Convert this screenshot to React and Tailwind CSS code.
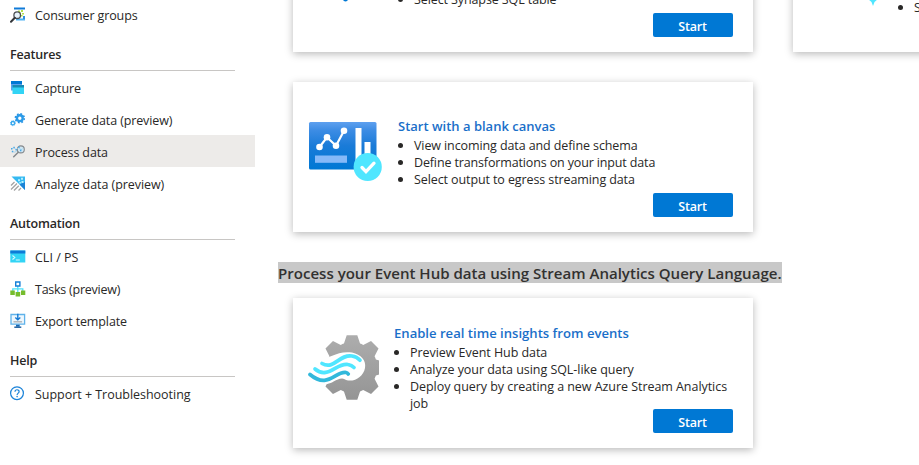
const CARD = 'flex h-[150px] w-[460px] flex-col bg-white shadow-[0_2px_8px_rgba(0,0,0,0.28)]';

function ConsumerIcon() {
  return (
    <svg width="16" height="16" viewBox="0 0 16 16">
      <path d="M4 .5h11v2H4z" fill="#0f7ad8" />
      <path d="M6 11.5h9v2H6z" fill="#50b3f2" />
      <path d="M13 9h2v3h-2z" fill="#2f8fe0" />
      <path d="M8 3.5h2v1.5H8zM11 3h2v2h-2zM12 6h2v1.5h-2zM9 5.6h2v1.4H9zM11 8h1.6v1.6H11z" fill="#b4e04a" />
      <circle cx="7.2" cy="8.2" r="3.3" fill="#e8f3fb" stroke="#4b4f54" strokeWidth="1.3" />
      <path d="M4.8 10.8 1 14.8" stroke="#33363a" strokeWidth="2" strokeLinecap="round" />
    </svg>
  );
}

function CaptureIcon() {
  return (
    <svg width="16" height="16" viewBox="0 0 16 16">
      <path d="M1 1h11v9.5H1z" fill="#5ea0ef" />
      <path d="M1 1h11v3H1z" fill="#0078d4" />
      <path d="M2.5 5H14v9H2.5z" fill="#32d4f5" />
      <path d="M2.5 5H14v2.5H2.5z" fill="#198ab3" />
    </svg>
  );
}

function GearsIcon() {
  return (
    <svg width="16" height="16" viewBox="0 0 16 16" fill="none">
      <circle cx="9.8" cy="6.2" r="2.9" stroke="#2b9be8" strokeWidth="2.4" />
      <circle cx="9.8" cy="6.2" r="4.5" stroke="#2391e4" strokeWidth="1.5" strokeDasharray="1.77 1.764" />
      <circle cx="2.9" cy="11.2" r="1.7" stroke="#37a8ee" strokeWidth="1.4" />
      <circle cx="2.9" cy="11.2" r="2.5" stroke="#37a8ee" strokeWidth=".8" strokeDasharray="1 .96" />
    </svg>
  );
}

function ProcessIcon() {
  return (
    <svg width="16" height="16" viewBox="0 0 16 16" fill="none">
      <circle cx="10.8" cy="5.4" r="3.5" fill="#cfe6f3" stroke="#85898d" strokeWidth="1.1" />
      <path d="m8.3 8.2-4.6 4.6" stroke="#85898d" strokeWidth="1.5" strokeLinecap="round" />
      <path d="M1.5 4.8 4 3.6l2.2 2L9 3.2l1.8 3 1.7-1.6M2 7.6l3 .6 2-1.6" stroke="#8fcbee" strokeWidth=".7" />
      <path d="M1 4h1.4v1.4H1zM3.4 2.8h1.4v1.4H3.4zM5.5 5h1.4v1.4H5.5zM1.8 6.8h1.4v1.4H1.8zM8.2 2.6h1.4V4H8.2zM10 5.8h1.4v1.4H10z" fill="#4aa8e6" />
    </svg>
  );
}

function AnalyzeIcon() {
  return (
    <svg width="16" height="16" viewBox="0 0 16 16" fill="none">
      <path d="M1.5.5H15V14z" fill="#35b9f1" />
      <path d="M15 6v8L9.6 8.6z" fill="#1b83d6" />
      <path d="M8 3.2h2v2H8zM11 1.8h2v2h-2zM11.5 5h2v2h-2zM9.3 6h1.5v1.5H9.3z" fill="#b5efff" />
      <path d="M1 9.5 4.5 6M1 13.5 7 7.5M4 14.5l4.8-4.8M8.5 14.5 11 12" stroke="#a3a3a3" strokeWidth="1.3" />
    </svg>
  );
}

function TerminalIcon() {
  return (
    <svg width="16" height="16" viewBox="0 0 16 16" fill="none">
      <path d="M.3 1.5h15v12H.3z" fill="#32d4f5" />
      <path d="M.3 1.5h15v3H.3z" fill="#0d7bd6" />
      <path d="m2.5 6.5 2.3 2-2.3 2M5.8 11h4" stroke="#d9f7fd" strokeWidth="1.1" />
    </svg>
  );
}

function TasksIcon() {
  return (
    <svg width="16" height="16" viewBox="0 0 16 16" fill="none">
      <path d="M7.8 5v7M2.8 11V7.8h10V11" stroke="#50e0f8" strokeWidth="1.3" />
      <path d="M5.7 1h4.2v4H5.7z" fill="#fff" stroke="#1680d8" strokeWidth="1.4" />
      <path d="M.3 9.5h4.5V14H.3zM5.6 11h4.6v4.5H5.6zM11 9.5h4.3V14H11z" fill="#76bc2d" />
    </svg>
  );
}

function ExportIcon() {
  return (
    <svg width="16" height="16" viewBox="0 0 16 16" fill="none">
      <path d="M1 1.5h13.6v9.6H1z" fill="#eef7fd" stroke="#5fb2ea" strokeWidth="1.3" />
      <path d="M7.8.8v5.4M5.3 4.4l2.5 2.4 2.5-2.4" stroke="#1479d3" strokeWidth="1.4" />
      <path d="M3.5 8.8h8.6" stroke="#a9adb0" strokeWidth="1.3" />
      <path d="M6 11.7h3.7v2H6z" fill="#1668b4" />
      <path d="M4.3 13.5h7v1.4h-7z" fill="#155a9c" />
    </svg>
  );
}

function HelpIcon() {
  return (
    <svg width="16" height="16" viewBox="0 0 16 16" fill="none">
      <circle cx="7" cy="7.2" r="6.4" stroke="#1a82d8" strokeWidth="1.2" />
      <path d="M5 5.8C5 3 9.2 3.1 9.1 5.7 9 7.1 7.1 7.2 7.1 9" stroke="#1a82d8" strokeWidth="1.2" />
      <circle cx="7.1" cy="10.6" r=".8" fill="#1a82d8" />
    </svg>
  );
}

function CanvasIcon() {
  return (
    <svg width="76" height="64" viewBox="0 0 76 64" className="block">
      <defs>
        <linearGradient id="board" x1="0" y1="0" x2="0" y2="1">
          <stop offset="0" stopColor="#5ea0ef" />
          <stop offset=".18" stopColor="#3c8ce4" />
          <stop offset=".5" stopColor="#1a7bd8" />
          <stop offset="1" stopColor="#0078d4" />
        </linearGradient>
      </defs>
      <rect x="1" y="2" width="67.5" height="47.5" rx="1.5" fill="url(#board)" />
      <path d="M7 35.5h32v7.3H7z" fill="#86b9f8" />
      <path d="M47.5 8h6v42h-6zM56.5 22h6v25h-6z" fill="#fff" />
      <path d="m11.5 27 7.5-9.7 9 8.5 8-15" fill="none" stroke="#fff" strokeWidth="2.2" />
      <circle cx="11.5" cy="27" r="3.3" fill="#fff" />
      <circle cx="19" cy="17.3" r="3.3" fill="#fff" />
      <circle cx="28" cy="25.7" r="3.3" fill="#fff" />
      <circle cx="36" cy="10.8" r="3.3" fill="#fff" />
      <circle cx="59.7" cy="47" r="14.1" fill="#50e6ff" />
      <path d="m54 47.5 4 4.2 8-8.5" fill="none" stroke="#fff" strokeWidth="3.3" strokeLinecap="round" />
    </svg>
  );
}

const TEETH = [0, 45, 90, 135, 180, 225, 270, 315];

function StreamIcon() {
  return (
    <svg width="72" height="66" viewBox="0 0 72 66" className="block">
      <defs>
        <linearGradient id="gear" x1="0" y1="0" x2="0" y2="1">
          <stop offset="0" stopColor="#adadad" />
          <stop offset="1" stopColor="#949494" />
        </linearGradient>
        <clipPath id="gearShape">
          <circle cx="44" cy="32.5" r="25.2" />
          {TEETH.map((a) => (
            <path key={a} d="M35.5 10 38.7.3h10.6L52.5 10z" transform={`rotate(${a} 44 32.5)`} />
          ))}
        </clipPath>
      </defs>
      <rect width="71" height="66" fill="url(#gear)" clipPath="url(#gearShape)" />
      <path d="M8 24c12 2 20-9 36-6.5 9 2 14.5 8 13 15.5-1.5 8-9 13.5-17 12.5-3-.5-4-2-6-2-7 0-11 8-22 5z" fill="#fff" />
      <g fill="none" strokeWidth="3.7" strokeLinecap="round">
        <path d="M14 28.5c12 7 17-9.5 30-7.5 4 .6 6 2 8 4.2" stroke="#50e6ff" />
        <path d="M7 34c13 11 22-7 33-4.5 3 .6 4.5 1.5 6 3" stroke="#50e6ff" />
        <path d="M2 39.5c18 15 25-3.5 36-2 1.2.2 1.5.5 2.2 1.5" stroke="#32b8db" />
      </g>
    </svg>
  );
}

function NavItem({ icon, label, active = false, spacing = 'tracking-[-0.12px]' }) {
  return (
    <a className={`flex h-8 shrink-0 items-center gap-[9px] pl-[10px] pt-[2px] ${active ? 'bg-[#edebe9]' : ''}`}>
      {icon}
      <span className={`whitespace-nowrap pt-px ${spacing}`}>{label}</span>
    </a>
  );
}

function NavHeading({ children }) {
  return (
    <h2 className="ml-[10px] mr-5 h-[41px] shrink-0 border-b border-[#c8c6c4] pt-4 font-semibold leading-[18px] tracking-[-0.2px]">
      {children}
    </h2>
  );
}

function Bullet({ children }) {
  return (
    <li className="flex gap-[11px]">
      <span className="mt-[6px] size-[5px] shrink-0 rounded-full bg-[#292827]" />
      <span>{children}</span>
    </li>
  );
}

function StartButton() {
  return (
    <button className="mr-5 flex h-6 w-20 shrink-0 items-center justify-center self-end rounded-[2px] bg-[#0078d4] pr-px pt-[3px] font-semibold tracking-[-0.2px] text-white">
      Start
    </button>
  );
}

export default function App() {
  return (
    <div className="flex h-[465px] w-[919px] overflow-hidden bg-white font-['Open_Sans','Noto_Sans',sans-serif] text-[12.5px] leading-[17px] text-[#292827]">
      <nav className="flex w-[255px] shrink-0 flex-col">
        <div className="-mt-[2px] flex flex-col">
          <NavItem icon={<ConsumerIcon />} label="Consumer groups" />
        </div>
        <NavHeading>Features</NavHeading>
        <NavItem icon={<CaptureIcon />} label="Capture" />
        <NavItem icon={<GearsIcon />} label="Generate data (preview)" />
        <NavItem icon={<ProcessIcon />} label="Process data" active />
        <NavItem icon={<AnalyzeIcon />} label="Analyze data (preview)" spacing="tracking-[-0.06px]" />
        <NavHeading>Automation</NavHeading>
        <NavItem icon={<TerminalIcon />} label="CLI / PS" spacing="tracking-normal" />
        <NavItem icon={<TasksIcon />} label="Tasks (preview)" spacing="tracking-[-0.25px]" />
        <NavItem icon={<ExportIcon />} label="Export template" />
        <NavHeading>Help</NavHeading>
        <NavItem icon={<HelpIcon />} label="Support + Troubleshooting" spacing="tracking-[-0.03px]" />
      </nav>

      <main className="flex min-w-0 flex-1 flex-col items-start pl-[23px]">
        <div className="-mt-[98px] ml-[15px] flex shrink-0 gap-10">
          <section className={`${CARD} shrink-0`}>
            <div className="flex h-[111px] shrink-0 items-end">
              <svg width="74" height="14" viewBox="0 0 74 14" className="ml-[15px] block">
                <path d="M34 0h7l-1.5 1.5a2.5 1.8 0 0 1-4 0z" fill="#0078d4" />
              </svg>
              <ul className="mb-[5px] ml-[16px] whitespace-nowrap tracking-[-0.1px]">
                <Bullet>Select Synapse SQL table</Bullet>
              </ul>
            </div>
            <StartButton />
          </section>
          <section className={`${CARD} shrink-0`}>
            <div className="flex h-[111px] shrink-0 items-end">
              <svg width="74" height="14" viewBox="0 0 74 14" className="ml-[15px] block">
                <path d="M60 0h10l-3.5 3-1.5 4-1.5-4z" fill="#50e6ff" />
              </svg>
              <ul className="-mb-[3px] ml-[16px] whitespace-nowrap">
                <Bullet>Select output to egress streaming data</Bullet>
              </ul>
            </div>
            <StartButton />
          </section>
        </div>

        <section className={`${CARD} ml-[15px] mt-[30px] shrink-0`}>
          <div className="flex h-[111px] shrink-0 items-start">
            <div className="ml-[15px] mt-[38px]">
              <CanvasIcon />
            </div>
            <div className="ml-[14px] mt-[36px] whitespace-nowrap">
              <h3 className="mb-[2px] text-[13px] font-semibold text-[#1a6fc9]">Start with a blank canvas</h3>
              <ul className="tracking-[-0.1px]">
                <Bullet>View incoming data and define schema</Bullet>
                <Bullet>
                  <span className="tracking-[-0.14px]">Define transformations on your input data</span>
                </Bullet>
                <Bullet>Select output to egress streaming data</Bullet>
              </ul>
            </div>
          </div>
          <StartButton />
        </section>

        <h2 className="mt-[30px] h-[21px] w-[504px] shrink-0 whitespace-nowrap bg-[#c8c8c8] pt-px text-[15.05px] font-semibold leading-[21px] text-[#323130]">
          Process your Event Hub data using Stream Analytics Query Language.
        </h2>

        <section className={`${CARD} ml-[15px] mt-[15px] shrink-0`}>
          <div className="flex h-[111px] shrink-0 items-start">
            <div className="ml-[15px] mt-[37px]">
              <StreamIcon />
            </div>
            <div className="ml-[14px] mt-[27px] w-[345px]">
              <h3 className="mb-[2px] text-[13.1px] font-semibold text-[#1a6fc9]">Enable real time insights from events</h3>
              <ul className="tracking-[-0.05px]">
                <Bullet>Preview Event Hub data</Bullet>
                <Bullet>Analyze your data using SQL-like query</Bullet>
                <Bullet>Deploy query by creating a new Azure Stream Analytics job</Bullet>
              </ul>
            </div>
          </div>
          <StartButton />
        </section>
      </main>
    </div>
  );
}
